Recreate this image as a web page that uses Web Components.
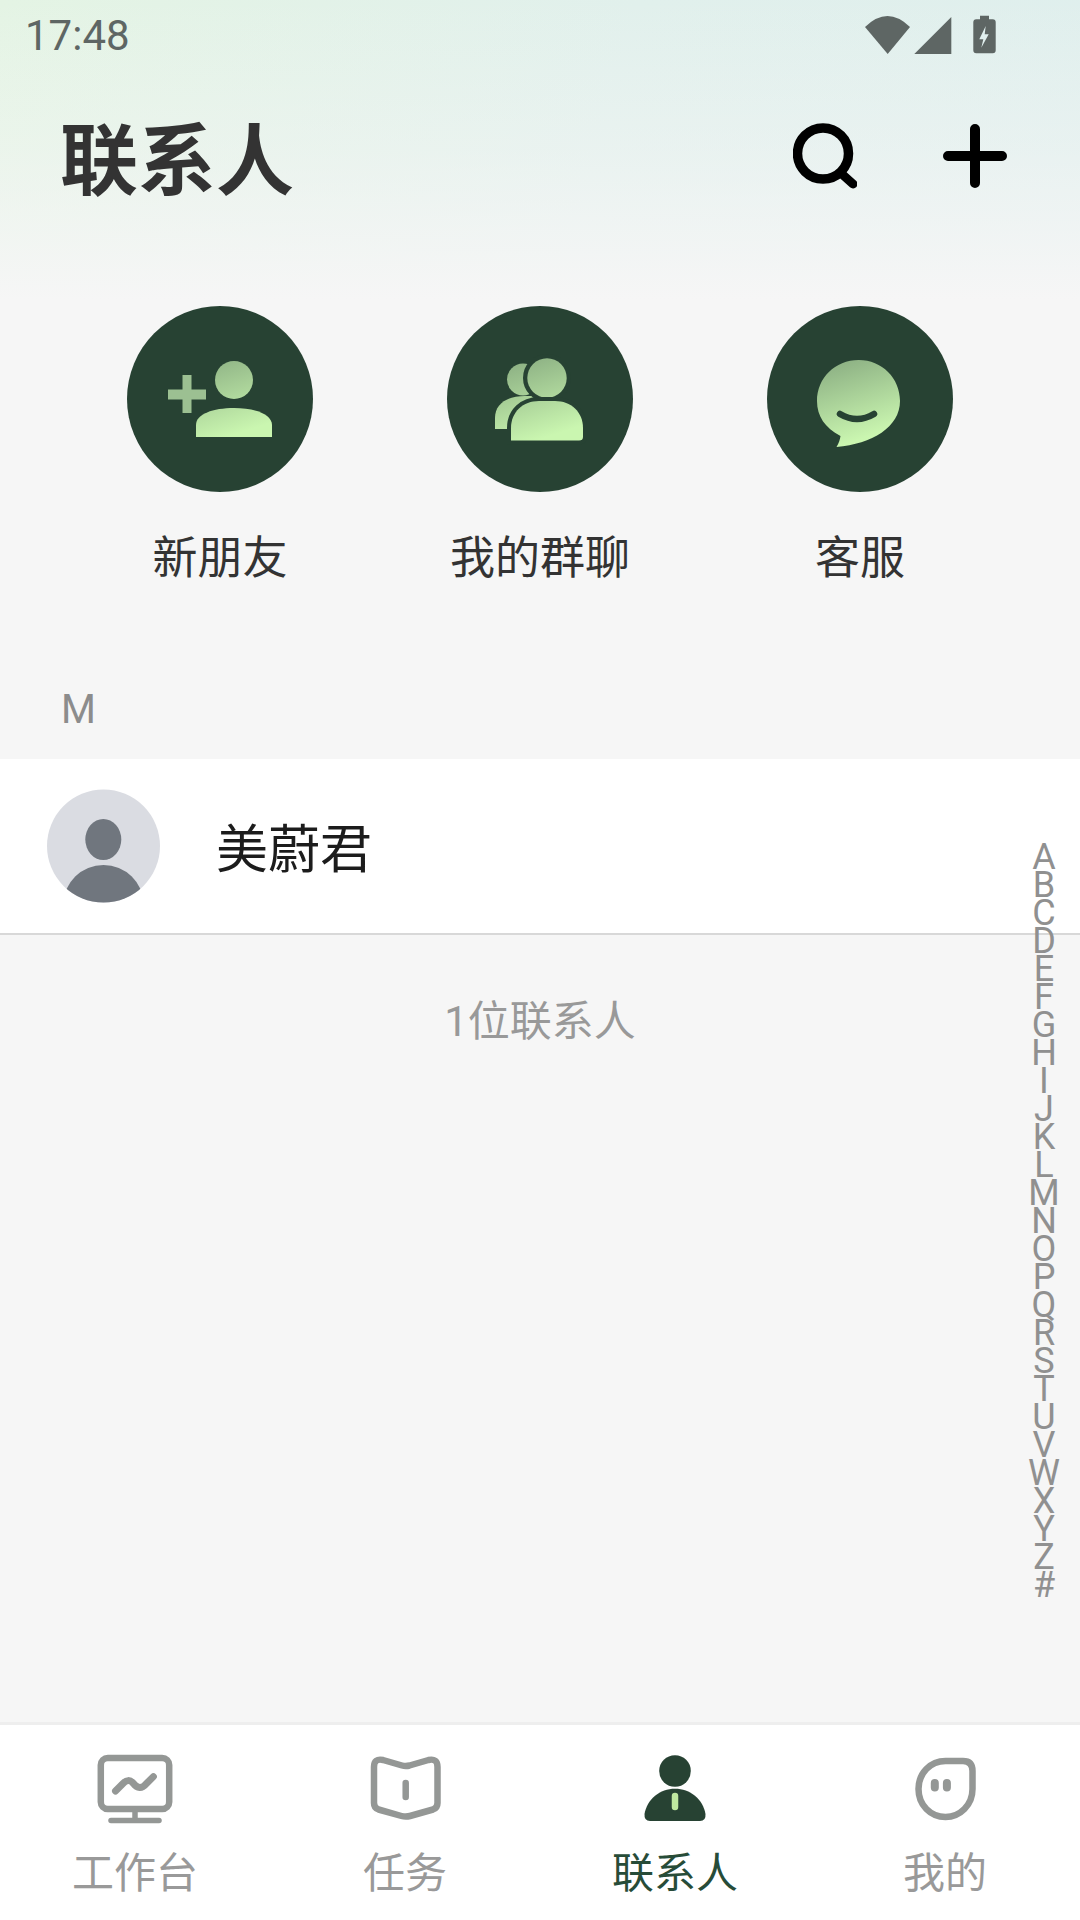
<!DOCTYPE html>
<html lang="zh">
<head>
<meta charset="utf-8">
<title>联系人</title>
<style>
  html, body { margin: 0; padding: 0; }
  body { font-family: Roboto, "Noto Sans CJK SC", sans-serif; background: #f6f6f6; }
</style>
</head>
<body>
<app-screen>
  <status-bar time="17:48"></status-bar>
  <page-header title="联系人"></page-header>
  <quick-actions>
    <quick-action label="新朋友">
      <svg width="186" height="186" viewBox="0 0 186 186">
        <defs><linearGradient id="g" gradientUnits="userSpaceOnUse" x1="75" y1="54" x2="100" y2="131"><stop offset="0" stop-color="#8db184"/><stop offset="1" stop-color="#caf6b0"/></linearGradient></defs>
        <circle cx="107" cy="74" r="19" fill="url(#g)"/>
        <path d="M69 131 V119 C69 108 86 102 107 102 C128 102 145 108 145 119 V131 Z" fill="url(#g)"/>
        <path d="M55.500 69 H64.500 V83.500 H79 V93.500 H64.500 V107 H55.500 V93.500 H41 V83.500 H55.500 Z" fill="#9cc092"/>
      </svg>
    </quick-action>
    <quick-action label="我的群聊">
      <svg width="186" height="186" viewBox="0 0 186 186">
        <defs><linearGradient id="g" gradientUnits="userSpaceOnUse" x1="75" y1="52" x2="105" y2="135"><stop offset="0" stop-color="#8db184"/><stop offset="1" stop-color="#caf6b0"/></linearGradient></defs>
        <circle cx="76" cy="73.500" r="16" fill="url(#g)"/>
        <path d="M48 123 V112 C48 98 60 90 78 90 H100 V123 Z" fill="url(#g)"/>
        <circle cx="100" cy="72" r="19.700" fill="url(#g)" stroke="#274233" stroke-width="8.600" paint-order="stroke"/>
        <path d="M64 134.500 V122 C64 106 76 95 92 95 H108 C124 95 136 106 136 122 V131 Q136 134.500 132 134.500 Z" fill="url(#g)" stroke="#274233" stroke-width="8" paint-order="stroke"/>
      </svg>
    </quick-action>
    <quick-action label="客服">
      <svg width="186" height="186" viewBox="0 0 186 186">
        <defs><linearGradient id="g" gradientUnits="userSpaceOnUse" x1="75" y1="62" x2="105" y2="138"><stop offset="0" stop-color="#8db184"/><stop offset="1" stop-color="#caf6b0"/></linearGradient></defs>
        <path d="M73.500 130 C58 122 50 110 50 95 C50 72 68 54 91.700 54 C115 54 133 72 133 95 C133 121 105 138 69.500 141 C72 137 73 133 73.500 130 Z" fill="url(#g)"/>
        <path d="M73 108 Q90 118 107 108" fill="none" stroke="#274233" stroke-width="6.500" stroke-linecap="round"/>
      </svg>
    </quick-action>
  </quick-actions>
  <contact-list letter="M" count="1位联系人">
    <contact-row name="美蔚君"></contact-row>
  </contact-list>
  <alpha-index></alpha-index>
  <tab-bar>
    <tab-item label="工作台">
      <svg width="90" height="72" viewBox="0 0 90 72" fill="none" stroke="#949795" stroke-linecap="round" stroke-linejoin="round">
        <rect x="10.800" y="5" width="68.400" height="51" rx="7" stroke-width="6.500"/>
        <path d="M45 56 V67" stroke-width="5.500"/>
        <path d="M21 67.400 H69" stroke-width="5.500"/>
        <path d="M25.500 38 L33 30.500 Q38.300 25 43 30 Q49.700 38.500 56 31 L63.400 23.600" stroke-width="7"/>
      </svg>
    </tab-item>
    <tab-item label="任务">
      <svg width="90" height="72" viewBox="0 0 90 72" fill="none" stroke="#949795" stroke-linecap="round" stroke-linejoin="round">
        <path d="M14 14 Q14 5 23 7 L42 12.500 Q45.700 13.500 49.500 12.500 L68.500 7 Q77.500 5 77.500 14 V50 Q77.500 55 73 56.500 L50 63 Q45.700 64.200 41.500 63 L18.500 56.500 Q14 55 14 50 Z" stroke-width="6.500"/>
        <path d="M45.700 30 V44" stroke-width="6.500"/>
      </svg>
    </tab-item>
    <tab-item label="联系人" active>
      <svg width="90" height="72" viewBox="0 0 90 72">
        <circle cx="45" cy="18" r="15.800" fill="#274233"/>
        <path d="M14.500 61 C17 46 30 35.700 45 35.700 C60 35.700 73 46 75.500 61 Q76 68 70 68 H20 Q14 68 14.500 61 Z" fill="#274233"/>
        <path d="M45 43 V54" stroke="#bfe8a0" stroke-width="6.500" stroke-linecap="round"/>
      </svg>
    </tab-item>
    <tab-item label="我的">
      <svg width="90" height="72" viewBox="0 0 90 72" fill="none" stroke="#949795" stroke-linecap="round">
        <path d="M45.500 8 H63 Q72.500 8 72.500 18 V36 C72.500 52 60 64 45.500 64 C30.500 64 18.500 52 18.500 36 C18.500 20 30.500 8 45.500 8 Z" stroke-width="6.500"/>
        <path d="M34.800 30 V34.500 M46.900 30 V34.500" stroke-width="8"/>
      </svg>
    </tab-item>
  </tab-bar>
</app-screen>

<script>
const CJK = 'Roboto, "Noto Sans CJK SC", sans-serif';

class AppScreen extends HTMLElement {
  constructor() {
    super();
    this.attachShadow({ mode: "open" });
    this.shadowRoot.innerHTML = `<style>
      :host {
        display: flex;
        flex-direction: column;
        position: relative;
        width: 1080px;
        height: 1920px;
        overflow: hidden;
        background:
          linear-gradient(180deg, rgba(246,246,246,0) 0, rgba(246,246,246,.4) 150px, #f6f6f6 300px),
          linear-gradient(105deg, #e4f4e4 0, #e1f0ec 40%, #deeeee 100%);
        font-family: ${CJK};
      }
    </style><slot></slot>`;
  }
}

class StatusBar extends HTMLElement {
  constructor() {
    super();
    this.attachShadow({ mode: "open" });
    this.shadowRoot.innerHTML = `<style>
      :host {
        display: flex;
        justify-content: space-between;
        align-items: center;
        height: 70px;
        padding: 0 84px 0 25px;
        box-sizing: border-box;
        flex: none;
      }
      .time { font: 400 42px Roboto, sans-serif; color: #5e6664; }
      svg { display: block; }
    </style>
    <span class="time">${this.getAttribute("time")}</span>
    <svg width="132" height="70" viewBox="864 0 132 70" fill="#5e6664">
      <path d="M865 27 Q887.500 5 910 27 L887.700 54 Z"/>
      <path d="M914.300 54 L951.300 17 V54 Z"/>
      <path d="M980 15.700 H989 V19.300 H992.700 Q995.700 19.300 995.700 22.300 V50.300 Q995.700 53.300 992.700 53.300 H976.300 Q973.300 53.300 973.300 50.300 V22.300 Q973.300 19.300 976.300 19.300 H980 Z"/>
      <path d="M985.700 26 L979.300 39.300 H983.300 L981.300 47.700 L988.700 34.300 H984.700 Z" fill="#e0efee"/>
    </svg>`;
  }
}

class PageHeader extends HTMLElement {
  constructor() {
    super();
    this.attachShadow({ mode: "open" });
    this.shadowRoot.innerHTML = `<style>
      :host {
        display: flex;
        align-items: center;
        justify-content: space-between;
        height: 180px;
        padding: 0 73px 0 60px;
        box-sizing: border-box;
        flex: none;
      }
      h1 { margin: 6px 0 0; font: 700 78px/1 ${CJK}; color: #333; }
      .actions { display: flex; gap: 86px; align-items: center; margin-bottom: 9px; }
      svg { display: block; }
    </style>
    <h1>${this.getAttribute("title")}</h1>
    <div class="actions">
      <svg width="64" height="66" viewBox="0 0 64 66" fill="none" stroke="#000" stroke-linecap="round">
        <circle cx="30" cy="30.500" r="25.500" stroke-width="9.500"/>
        <path d="M50 52 L60 61" stroke-width="9"/>
      </svg>
      <svg width="64" height="64" viewBox="0 0 64 64" fill="none" stroke="#000" stroke-width="10" stroke-linecap="round">
        <path d="M32 5 V59 M5 32 H59"/>
      </svg>
    </div>`;
  }
}

class QuickActions extends HTMLElement {
  constructor() {
    super();
    this.attachShadow({ mode: "open" });
    this.shadowRoot.innerHTML = `<style>
      :host {
        display: grid;
        grid-template-columns: repeat(3, 320px);
        justify-content: center;
        padding-top: 56px;
        flex: none;
      }
    </style><slot></slot>`;
  }
}

class QuickAction extends HTMLElement {
  constructor() {
    super();
    this.attachShadow({ mode: "open" });
    this.shadowRoot.innerHTML = `<style>
      :host { display: flex; flex-direction: column; align-items: center; }
      .circle { width: 186px; height: 186px; border-radius: 50%; background: #274233; }
      ::slotted(svg) { display: block; }
      .label { margin-top: 35px; font: 400 45px/64px ${CJK}; color: #333; }
    </style>
    <div class="circle"><slot></slot></div>
    <div class="label">${this.getAttribute("label")}</div>`;
  }
}

class ContactList extends HTMLElement {
  constructor() {
    super();
    this.attachShadow({ mode: "open" });
    this.shadowRoot.innerHTML = `<style>
      :host { display: block; flex: 1; min-height: 0; }
      .letter { padding: 95px 0 25px 61px; font: 400 40px/48px Roboto, sans-serif; color: #8c8c8c; }
      .count { margin-top: 57px; text-align: center; font: 400 42px/60px ${CJK}; color: #999; }
    </style>
    <div class="letter">${this.getAttribute("letter")}</div>
    <slot></slot>
    <div class="count">${this.getAttribute("count")}</div>`;
  }
}

class ContactRow extends HTMLElement {
  constructor() {
    super();
    this.attachShadow({ mode: "open" });
    this.shadowRoot.innerHTML = `<style>
      :host {
        display: flex;
        align-items: center;
        height: 176px;
        box-sizing: border-box;
        padding-left: 47px;
        background: #fff;
        border-bottom: 2px solid #d8d8d8;
      }
      svg { display: block; }
      .name { margin: 10px 0 0 56px; font: 400 52px/1 ${CJK}; color: #1c1c1c; }
    </style>
    <svg width="113" height="114" viewBox="0 0 113 114">
      <defs><clipPath id="c"><circle cx="56.500" cy="57" r="56.500"/></clipPath></defs>
      <circle cx="56.500" cy="57" r="56.500" fill="#dadce2"/>
      <g clip-path="url(#c)" fill="#70767e">
        <ellipse cx="56.300" cy="50.500" rx="18" ry="20.500"/>
        <ellipse cx="56.500" cy="115" rx="40" ry="39"/>
      </g>
    </svg>
    <div class="name">${this.getAttribute("name")}</div>`;
  }
}

class AlphaIndex extends HTMLElement {
  constructor() {
    super();
    this.attachShadow({ mode: "open" });
    const letters = "ABCDEFGHIJKLMNOPQRSTUVWXYZ#".split("");
    this.shadowRoot.innerHTML = `<style>
      :host {
        position: absolute;
        top: 843px;
        right: 16px;
        width: 40px;
        text-align: center;
        font: 400 36px/28px Roboto, sans-serif;
        color: #909090;
      }
      div { height: 28px; }
    </style>` + letters.map(l => `<div>${l}</div>`).join("");
  }
}

class TabBar extends HTMLElement {
  constructor() {
    super();
    this.attachShadow({ mode: "open" });
    this.shadowRoot.innerHTML = `<style>
      :host {
        display: grid;
        grid-template-columns: repeat(4, 270px);
        height: 198px;
        box-sizing: border-box;
        background: #fff;
        border-top: 3px solid #eee;
        flex: none;
      }
    </style><slot></slot>`;
  }
}

class TabItem extends HTMLElement {
  constructor() {
    super();
    this.attachShadow({ mode: "open" });
    this.shadowRoot.innerHTML = `<style>
      :host { display: flex; flex-direction: column; align-items: center; padding-top: 28px; }
      ::slotted(svg) { display: block; }
      .label { margin-top: 19px; font: 400 42px/60px ${CJK}; color: #999; }
      :host([active]) .label { color: #274c38; }
    </style>
    <slot></slot>
    <div class="label">${this.getAttribute("label")}</div>`;
  }
}

customElements.define("app-screen", AppScreen);
customElements.define("status-bar", StatusBar);
customElements.define("page-header", PageHeader);
customElements.define("quick-actions", QuickActions);
customElements.define("quick-action", QuickAction);
customElements.define("contact-list", ContactList);
customElements.define("contact-row", ContactRow);
customElements.define("alpha-index", AlphaIndex);
customElements.define("tab-bar", TabBar);
customElements.define("tab-item", TabItem);
</script>
</body>
</html>
